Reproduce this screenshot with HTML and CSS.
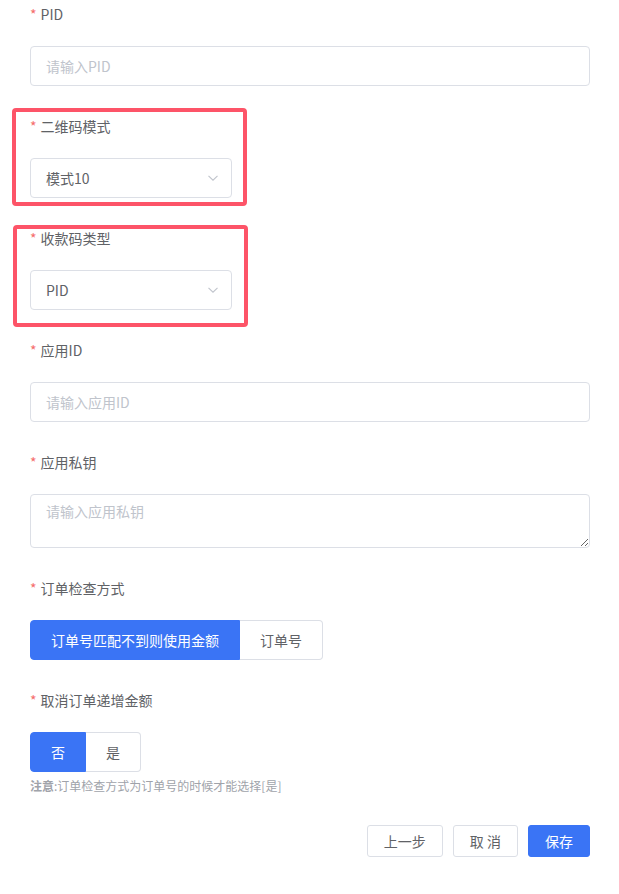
FILE: index.html
```html
<!DOCTYPE html>
<html lang="zh-CN">
<head>
<meta charset="utf-8">
<link rel="stylesheet" href="styles.css">
</head>
<body>
<form class="form">
  <div class="item">
    <div class="label"><span class="req">*</span>PID</div>
    <input class="input" placeholder="请输入PID">
  </div>

  <div class="item">
    <span class="mark mark-1"></span>
    <div class="label"><span class="req">*</span>二维码模式</div>
    <div class="select"><span>模式10</span><svg class="chev" viewBox="0 0 10 6" width="10" height="6"><path d="M0.5 0.8 L5 5.2 L9.5 0.8" fill="none" stroke="#c0c4cc" stroke-width="1.1"/></svg></div>
  </div>

  <div class="item">
    <span class="mark mark-2"></span>
    <div class="label"><span class="req">*</span>收款码类型</div>
    <div class="select"><span>PID</span><svg class="chev" viewBox="0 0 10 6" width="10" height="6"><path d="M0.5 0.8 L5 5.2 L9.5 0.8" fill="none" stroke="#c0c4cc" stroke-width="1.1"/></svg></div>
  </div>

  <div class="item">
    <div class="label"><span class="req">*</span>应用ID</div>
    <input class="input" placeholder="请输入应用ID">
  </div>

  <div class="item">
    <div class="label"><span class="req">*</span>应用私钥</div>
    <textarea class="textarea" placeholder="请输入应用私钥"></textarea>
  </div>

  <div class="item">
    <div class="label"><span class="req">*</span>订单检查方式</div>
    <div class="seg">
      <span class="seg-btn active">订单号匹配不到则使用金额</span>
      <span class="seg-btn">订单号</span>
    </div>
  </div>

  <div class="item item-last">
    <div class="label"><span class="req">*</span>取消订单递增金额</div>
    <div class="seg">
      <span class="seg-btn active">否</span>
      <span class="seg-btn">是</span>
    </div>
    <div class="tip"><b class="tip-strong">注意</b>:订单检查方式为订单号的时候才能选择[是]</div>
  </div>

  <div class="footer">
    <span class="btn">上一步</span>
    <span class="btn">取 消</span>
    <span class="btn btn-primary">保存</span>
  </div>
</form>
</body>
</html>
```

FILE: styles.css
```css
* { box-sizing: border-box; }

html, body {
  margin: 0;
  padding: 0;
  background: #ffffff;
}

body {
  font-family: "Noto Sans CJK SC", "Noto Sans", sans-serif;
  font-size: 14px;
  color: #606266;
}

.form {
  width: 560px;
  margin-left: 30px;
  padding-top: 4px;
  display: flex;
  flex-direction: column;
}

.item {
  position: relative;
  display: flex;
  flex-direction: column;
  align-items: flex-start;
  margin-bottom: 30px;
}

.item-last {
  margin-bottom: 0;
}

.label {
  height: 20px;
  line-height: 20px;
  font-size: 14px;
  color: #606266;
  margin-bottom: 22px;
}

.req {
  color: #f56c6c;
  margin-right: 4px;
}

.input,
.textarea {
  width: 560px;
  height: 40px;
  border: 1px solid #dcdfe6;
  border-radius: 4px;
  padding: 0 15px;
  font-family: inherit;
  font-size: 14px;
  color: #606266;
  outline: none;
  background: #fff;
}

.textarea {
  height: 54px;
  padding: 5px 15px;
  line-height: 22px;
  resize: vertical;
  display: block;
}

.input::placeholder,
.textarea::placeholder {
  color: #c0c4cc;
}

.select {
  width: 202px;
  height: 40px;
  border: 1px solid #dcdfe6;
  border-radius: 4px;
  padding: 0 13px 0 15px;
  display: flex;
  align-items: center;
  justify-content: space-between;
  color: #606266;
}

.chev {
  display: block;
}

.mark {
  position: absolute;
  left: -18px;
  width: 235px;
  border: 4px solid #fd5468;
  border-radius: 4px;
  pointer-events: none;
}

.mark-1 {
  top: -8px;
  height: 98px;
}

.mark-2 {
  top: -3px;
  left: -17px;
  height: 102px;
}

.seg {
  display: flex;
}

.seg-btn {
  height: 40px;
  line-height: 38px;
  padding: 0 20px;
  border: 1px solid #dcdfe6;
  font-size: 14px;
  color: #606266;
  background: #fff;
  white-space: nowrap;
}

.seg-btn:first-child {
  border-radius: 4px 0 0 4px;
}

.seg-btn:last-child {
  border-radius: 0 4px 4px 0;
  border-left: none;
}

.seg-btn.active {
  background: #3a74f5;
  border-color: #3a74f5;
  color: #ffffff;
}

.tip {
  margin-top: 6px;
  font-size: 12px;
  line-height: 16px;
  color: #a0a3aa;
}

.tip-strong {
  font-weight: 700;
}

.footer {
  display: flex;
  justify-content: flex-end;
  gap: 10px;
  margin-top: 31px;
}

.btn {
  height: 32px;
  line-height: 30px;
  padding: 0 16px;
  border: 1px solid #dcdfe6;
  border-radius: 3px;
  font-size: 14px;
  color: #606266;
  background: #fff;
}

.btn-primary {
  background: #3a74f5;
  border-color: #3a74f5;
  color: #fff;
}
```
